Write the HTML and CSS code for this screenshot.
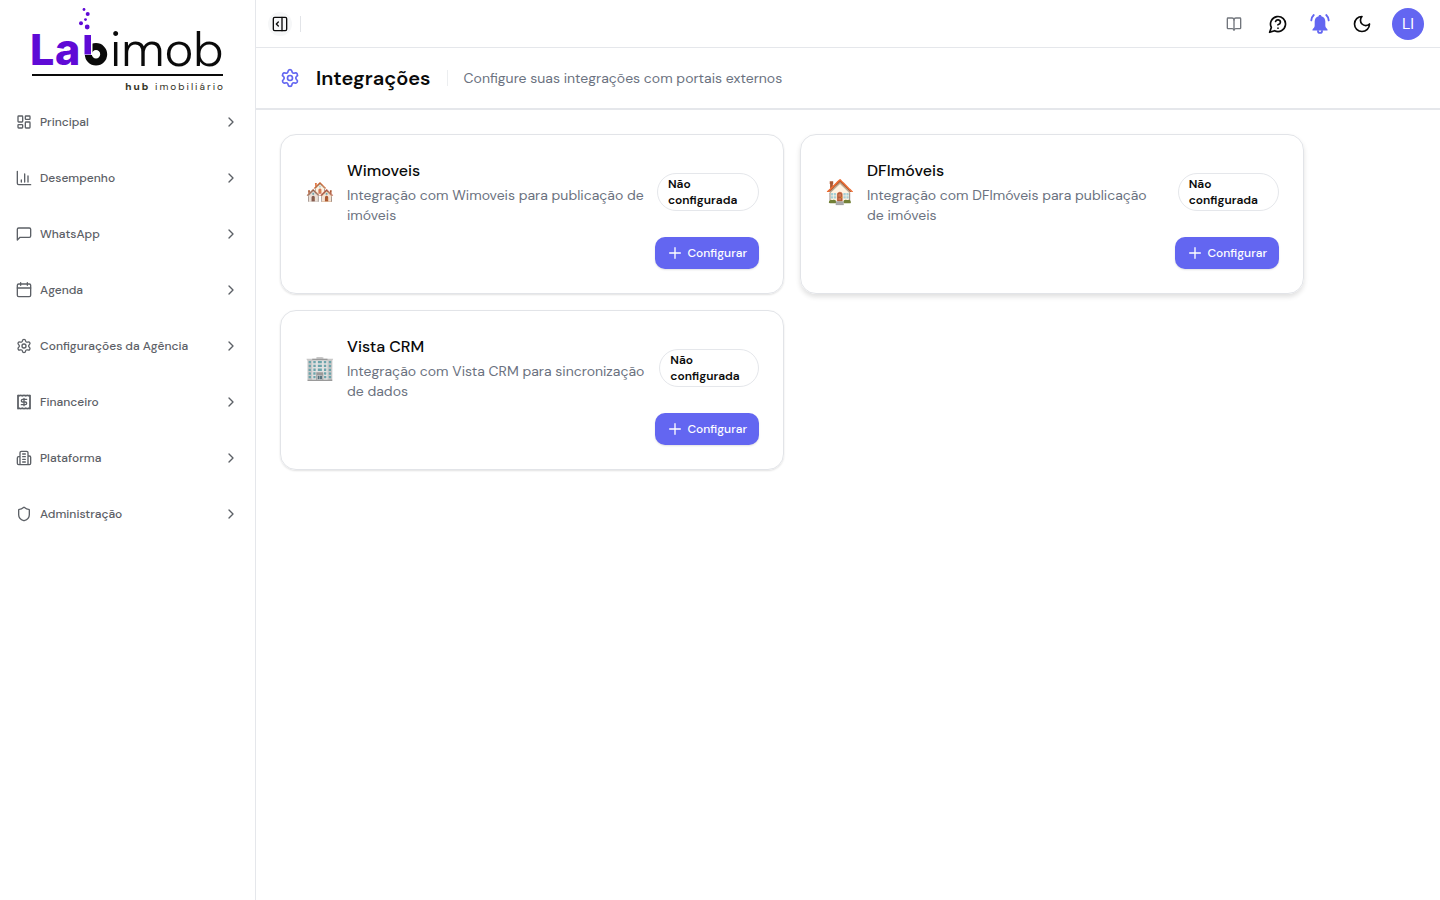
FILE: index.html
```html
<!DOCTYPE html>
<html lang="pt-BR">
<head>
<meta charset="utf-8">
<meta name="viewport" content="width=device-width, initial-scale=1">
<title>Integrações</title>
<link rel="stylesheet" href="styles.css">
</head>
<body>
<svg class="defs" aria-hidden="true">
  <symbol id="chevron" viewBox="0 0 24 24"><path d="m9 18 6-6-6-6"/></symbol>
  <symbol id="plus" viewBox="0 0 24 24"><path d="M4 12h16M12 4v16"/></symbol>
  <symbol id="gear" viewBox="0 0 24 24"><path d="M9.671 4.136a2.34 2.34 0 0 1 4.659 0 2.34 2.34 0 0 0 3.319 1.915 2.34 2.34 0 0 1 2.33 4.033 2.34 2.34 0 0 0 0 3.831 2.34 2.34 0 0 1-2.33 4.033 2.34 2.34 0 0 0-3.319 1.915 2.34 2.34 0 0 1-4.659 0 2.34 2.34 0 0 0-3.32-1.915 2.34 2.34 0 0 1-2.33-4.033 2.34 2.34 0 0 0 0-3.831A2.34 2.34 0 0 1 6.35 6.051a2.34 2.34 0 0 0 3.319-1.915"/><circle cx="12" cy="12" r="3"/></symbol>
  <symbol id="i-grid" viewBox="0 0 24 24"><rect width="7" height="9" x="3" y="3" rx="1"/><rect width="7" height="5" x="14" y="3" rx="1"/><rect width="7" height="9" x="14" y="12" rx="1"/><rect width="7" height="5" x="3" y="16" rx="1"/></symbol>
  <symbol id="i-chart" viewBox="0 0 24 24"><path d="M2 2v18a2 2 0 0 0 2 2h18M8 18v-3M13 18V6M18 18V9"/></symbol>
  <symbol id="i-chat" viewBox="0 0 24 24"><path d="M22 15a2 2 0 0 1-2 2H6l-4 4V5a2 2 0 0 1 2-2h16a2 2 0 0 1 2 2z"/></symbol>
  <symbol id="i-cal" viewBox="0 0 24 24"><path d="M7 1v4M17 1v4M2 9h20"/><rect width="20" height="19" x="2" y="3" rx="2"/></symbol>
  <symbol id="i-receipt" viewBox="0 0 24 24"><path d="M3 2h18v20H3z"/><path d="M3 2v20l2-1 2 1 2-1 3 1 3-1 2 1 2-1 2 1V2l-2 1-2-1-2 1-3-1-3 1-2-1-2 1zM16 8h-6a2 2 0 1 0 0 4h4a2 2 0 1 1 0 4H8M12 17.500v-11"/></symbol>
  <symbol id="i-building" viewBox="0 0 24 24"><path d="M6 22V4a2 2 0 0 1 2-2h8a2 2 0 0 1 2 2v18ZM6 10H4a2 2 0 0 0-2 2v8a2 2 0 0 0 2 2h2M18 9h2a2 2 0 0 1 2 2v9a2 2 0 0 1-2 2h-2M10 6h4M10 10h4M10 14h4M10 18h4"/></symbol>
  <symbol id="i-shield" viewBox="0 0 24 24"><path d="M20 13c0 5-3.500 7.500-7.660 8.950a1 1 0 0 1-.67-.01C7.500 20.500 4 18 4 13V6a1 1 0 0 1 1-1c2 0 4.500-1.200 6.240-2.720a1.170 1.170 0 0 1 1.520 0C14.510 3.810 17 5 19 5a1 1 0 0 1 1 1z"/></symbol>
</svg>
<div class="app">
  <aside class="sidebar">
    <svg class="logo" viewBox="0 0 224 104" role="img" aria-label="Labimob hub imobiliário">
      <g fill="#5f0ad6">
        <circle cx="68" cy="9.5" r="1.4"/><circle cx="71.7" cy="14" r="2"/><circle cx="69.5" cy="19.6" r="1.4"/><circle cx="65" cy="23.2" r="2"/><circle cx="71.2" cy="27" r="2.4"/>
        <text class="logo-bold" x="14 39" y="65">La</text>
      </g>
      <circle cx="80" cy="54.3" r="7.7" fill="none" stroke="#0a0a0a" stroke-width="7"/>
      <path d="M68 34h8.500v21H68z" fill="#fff"/>
      <path d="M68.500 35h6.500v19.500h-6.500z" fill="#5f0ad6"/>
      <text class="logo-light" x="94" y="66">imob</text>
      <path d="M16 74h191v2H16z" fill="#0a0a0a"/>
      <text class="logo-tag" x="209" y="90"><tspan class="logo-hub">hub</tspan> imobiliário</text>
    </svg>
    <nav class="nav">
      <button class="nav-item"><svg class="icon"><use href="#i-grid"/></svg><span>Principal</span><svg class="icon"><use href="#chevron"/></svg></button>
      <button class="nav-item"><svg class="icon"><use href="#i-chart"/></svg><span>Desempenho</span><svg class="icon"><use href="#chevron"/></svg></button>
      <button class="nav-item"><svg class="icon"><use href="#i-chat"/></svg><span>WhatsApp</span><svg class="icon"><use href="#chevron"/></svg></button>
      <button class="nav-item"><svg class="icon"><use href="#i-cal"/></svg><span>Agenda</span><svg class="icon"><use href="#chevron"/></svg></button>
      <button class="nav-item"><svg class="icon"><use href="#gear"/></svg><span>Configurações da Agência</span><svg class="icon"><use href="#chevron"/></svg></button>
      <button class="nav-item"><svg class="icon"><use href="#i-receipt"/></svg><span>Financeiro</span><svg class="icon"><use href="#chevron"/></svg></button>
      <button class="nav-item"><svg class="icon"><use href="#i-building"/></svg><span>Plataforma</span><svg class="icon"><use href="#chevron"/></svg></button>
      <button class="nav-item"><svg class="icon"><use href="#i-shield"/></svg><span>Administração</span><svg class="icon"><use href="#chevron"/></svg></button>
    </nav>
  </aside>
  <div class="main">
    <header class="topbar">
      <button class="toggle" aria-label="Recolher menu"><svg class="icon" viewBox="0 0 24 24"><rect width="20" height="20" x="2" y="2" rx="2"/><path d="M15 2v20M9.500 9l-3 3 3 3"/></svg></button>
      <span class="divider"></span>
      <div class="actions">
        <button class="action muted" aria-label="Documentação"><svg class="icon" viewBox="0 0 24 24"><path d="M12 6v15"/><path d="M3 19a1 1 0 0 1-1-1V4a1 1 0 0 1 1-1h6a3 3 0 0 1 3 3 3 3 0 0 1 3-3h6a1 1 0 0 1 1 1v14a1 1 0 0 1-1 1h-6a3 3 0 0 0-3 2 3 3 0 0 0-3-2z"/></svg></button>
        <button class="action" aria-label="Ajuda"><svg class="icon icon-lg" viewBox="0 0 24 24"><path d="M7.900 20A9 9 0 1 0 4 16.100L2 22Z"/><path d="M9.090 9a3 3 0 0 1 5.830 1c0 2-3 3-3 3M12 17h.01"/></svg></button>
        <button class="action bell" aria-label="Notificações"><svg class="icon icon-xl" viewBox="0 0 24 24"><path fill="currentColor" stroke="none" d="M12 2.200c.9 0 1.500.6 1.500 1.400 2.700.7 4.300 2.800 4.300 5.700v4.400c0 1.500.8 2.700 2.400 4.200v1.300H3.800v-1.300c1.600-1.500 2.400-2.700 2.400-4.200V9.300c0-2.900 1.600-5 4.300-5.700 0-.8.600-1.400 1.500-1.400z"/><path d="M9.800 19.500a2.200 2.200 0 0 0 4.400 0M5.200 2.200C3.600 3.700 2.700 5.600 2.500 8M18.800 2.200c1.600 1.500 2.500 3.400 2.700 5.800"/></svg></button>
        <button class="action" aria-label="Modo escuro"><svg class="icon icon-lg" viewBox="0 0 24 24"><path d="M12 3a6 6 0 0 0 9 9 9 9 0 1 1-9-9Z"/></svg></button>
        <button class="avatar">LI</button>
      </div>
    </header>
    <div class="page-head">
      <svg class="icon icon-lg accent"><use href="#gear"/></svg>
      <h1>Integrações</h1>
      <span class="divider faint"></span>
      <p>Configure suas integrações com portais externos</p>
    </div>
    <main class="cards">
      <article class="card">
        <div class="card-head">
          <div class="card-info">
            <span class="emoji">🏘️</span>
            <div><h2>Wimoveis</h2><p>Integração com Wimoveis para publicação de imóveis</p></div>
          </div>
          <span class="badge">Não configurada</span>
        </div>
        <button class="btn"><svg class="icon"><use href="#plus"/></svg>Configurar</button>
      </article>
      <article class="card raised">
        <div class="card-head">
          <div class="card-info">
            <span class="emoji">🏠</span>
            <div><h2>DFImóveis</h2><p>Integração com DFImóveis para publicação de imóveis</p></div>
          </div>
          <span class="badge">Não configurada</span>
        </div>
        <button class="btn"><svg class="icon"><use href="#plus"/></svg>Configurar</button>
      </article>
      <article class="card">
        <div class="card-head">
          <div class="card-info">
            <span class="emoji">🏢</span>
            <div><h2>Vista CRM</h2><p>Integração com Vista CRM para sincronização de dados</p></div>
          </div>
          <span class="badge">Não configurada</span>
        </div>
        <button class="btn"><svg class="icon"><use href="#plus"/></svg>Configurar</button>
      </article>
    </main>
  </div>
</div>
</body>
</html>
```
FILE: styles.css
```css
* { box-sizing: border-box; }
body {
  margin: 0;
  font-family: "DM Sans", Inter, "Liberation Sans", sans-serif;
  font-size: 14px;
  line-height: 20px;
  color: #0a0a0a;
  background: #fff;
}
h1, h2, p { margin: 0; }
button { font: inherit; color: inherit; background: none; border: 0; padding: 0; cursor: pointer; }
.defs { position: absolute; width: 0; height: 0; }
.app { display: flex; min-height: 100vh; }

.icon {
  width: 16px; height: 16px; flex: none;
  fill: none; stroke: currentColor; stroke-width: 2;
  stroke-linecap: round; stroke-linejoin: round;
}
.icon-lg { width: 20px; height: 20px; }
.icon-xl { width: 22px; height: 22px; }
.accent { color: #6366f1; }

.sidebar { width: 256px; flex: none; border-right: 1px solid #e5e7eb; }
.logo { display: block; width: 224px; margin: 0 16px; }
.logo-bold { font: 800 43px Inter, sans-serif; }
.logo-light { font: 300 49px "DM Sans", "Open Sans", sans-serif; fill: #0a0a0a; }
.logo-tag { font: 400 10px "DM Sans", "Open Sans", sans-serif; letter-spacing: 2px; text-anchor: end; fill: #33331f; }
.logo-hub { font-weight: 800; }
.nav { display: flex; flex-direction: column; gap: 16px; padding: 0 16px; margin-top: -2px; }
.nav-item {
  display: flex; align-items: center; gap: 8px; height: 40px;
  font-size: 12px; font-weight: 500; color: #5c6066; text-align: left;
}
.nav-item span { flex: 1; }

.main { flex: 1; min-width: 0; }
.topbar {
  display: flex; align-items: center; gap: 8px; height: 48px;
  padding: 0 16px 0 12px; border-bottom: 1px solid #e5e7eb;
}
.toggle { display: grid; place-items: center; width: 24px; height: 24px; border-radius: 12px; background: #f6f7f8; }
.divider { width: 1px; height: 16px; background: #e2e4e8; }
.faint { background: #eceef0; }
.actions { display: flex; align-items: center; gap: 10px; margin-left: auto; }
.action { display: grid; place-items: center; width: 32px; height: 32px; }
.muted { margin-right: 2px; color: #71757c; }
.bell { color: #6366f1; }
.avatar { width: 32px; height: 32px; margin-left: 4px; border-radius: 50%; background: #6366f1; color: #fff; font-size: 16px; }

.page-head {
  display: flex; align-items: center; gap: 16px; height: 62px;
  padding: 0 24px; border-bottom: 2px solid #e5e7eb;
}
.page-head h1 { font-size: 20px; line-height: 28px; font-weight: 600; }
.page-head p { color: #6b7280; }

.cards {
  display: grid; grid-template-columns: 1fr 1fr; gap: 16px;
  max-width: 1072px; padding: 24px;
}
.card {
  display: flex; flex-direction: column; gap: 12px; padding: 24px;
  border: 1px solid #e2e4e8; border-radius: 16px;
  box-shadow: 0 1px 2px rgba(0, 0, 0, .12);
}
.raised { box-shadow: 0 3px 5px rgba(0, 0, 0, .12); }
.card-head { display: flex; align-items: center; justify-content: space-between; gap: 12px; }
.card-info { display: flex; align-items: center; gap: 12px; }
.emoji { flex: none; font-size: 24px; line-height: 32px; }
.card-info h2 { margin-bottom: 2px; font-size: 16px; line-height: 24px; font-weight: 500; }
.card-info p { color: #6b7280; }
.badge {
  flex-shrink: 1.2; padding: 2px 10px;
  border: 1px solid #e5e7eb; border-radius: 20px;
  font-size: 12px; line-height: 16px; font-weight: 600;
}
.btn {
  display: flex; align-items: center; align-self: flex-end; gap: 4px;
  height: 32px; padding: 0 12px; border-radius: 10px;
  background: #6366f1; color: #fff; font-size: 12px; font-weight: 500;
  box-shadow: 0 1px 2px rgba(0, 0, 0, .12);
}
```
